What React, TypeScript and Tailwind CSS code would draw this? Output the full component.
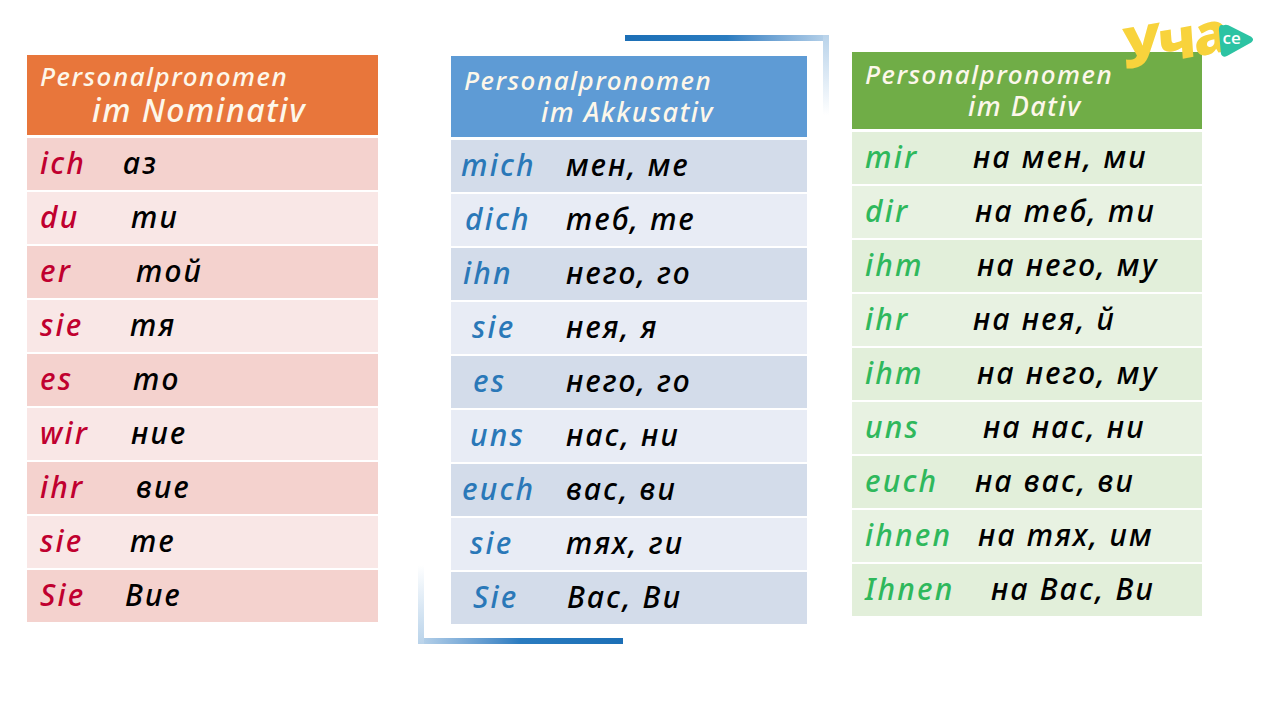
import React from 'react';

type Row = {
  de: string;
  bg: string;
  dePad: string;
  bgPad: string;
};

type Table = {
  line1: string;
  line2: string;
  line2Class: string;
  headerClass: string;
  headerHeight: string;
  wrapClass: string;
  colWidth: string;
  deColor: string;
  rowDark: string;
  rowLight: string;
  rows: Row[];
};

const TABLES: Table[] = [
  {
    line1: 'Personalpronomen',
    line2: 'im Nominativ',
    line2Class: 'pl-[52px] text-[32px] leading-[36px] tracking-[1.5px]',
    headerClass: 'bg-[#e8763b]',
    headerHeight: 'h-[80px]',
    wrapClass: 'mt-[55px] ml-[27px] w-[351px]',
    colWidth: 'w-[96px]',
    deColor: 'text-[#c0002f]',
    rowDark: 'bg-[#f4d2ce]',
    rowLight: 'bg-[#f9e7e6]',
    rows: [
      { de: 'ich', bg: 'аз', dePad: 'pl-[13px]', bgPad: 'pl-[0px]' },
      { de: 'du', bg: 'ти', dePad: 'pl-[13px]', bgPad: 'pl-[8px]' },
      { de: 'er', bg: 'той', dePad: 'pl-[13px]', bgPad: 'pl-[13px]' },
      { de: 'sie', bg: 'тя', dePad: 'pl-[13px]', bgPad: 'pl-[7px]' },
      { de: 'es', bg: 'то', dePad: 'pl-[13px]', bgPad: 'pl-[10px]' },
      { de: 'wir', bg: 'ние', dePad: 'pl-[13px]', bgPad: 'pl-[8px]' },
      { de: 'ihr', bg: 'вие', dePad: 'pl-[13px]', bgPad: 'pl-[13px]' },
      { de: 'sie', bg: 'те', dePad: 'pl-[13px]', bgPad: 'pl-[7px]' },
      { de: 'Sie', bg: 'Вие', dePad: 'pl-[13px]', bgPad: 'pl-[2px]' },
    ],
  },
  {
    line1: 'Personalpronomen',
    line2: 'im Akkusativ',
    line2Class: 'pl-[77px] text-[27px] leading-[31px] tracking-[1.5px]',
    headerClass: 'bg-[#5e9bd5]',
    headerHeight: 'h-[81px]',
    wrapClass: 'mt-[56px] ml-[73px] w-[356px]',
    colWidth: 'w-[115px]',
    deColor: 'text-[#2a78b8]',
    rowDark: 'bg-[#d3dcea]',
    rowLight: 'bg-[#e8ecf5]',
    rows: [
      { de: 'mich', bg: 'мен, ме', dePad: 'pl-[10px]', bgPad: 'pl-[0px]' },
      { de: 'dich', bg: 'теб, те', dePad: 'pl-[14px]', bgPad: 'pl-[0px]' },
      { de: 'ihn', bg: 'него, го', dePad: 'pl-[12px]', bgPad: 'pl-[0px]' },
      { de: 'sie', bg: 'нея, я', dePad: 'pl-[21px]', bgPad: 'pl-[0px]' },
      { de: 'es', bg: 'него, го', dePad: 'pl-[22px]', bgPad: 'pl-[0px]' },
      { de: 'uns', bg: 'нас, ни', dePad: 'pl-[19px]', bgPad: 'pl-[0px]' },
      { de: 'euch', bg: 'вас, ви', dePad: 'pl-[11px]', bgPad: 'pl-[0px]' },
      { de: 'sie', bg: 'тях, ги', dePad: 'pl-[19px]', bgPad: 'pl-[0px]' },
      { de: 'Sie', bg: 'Вас, Ви', dePad: 'pl-[22px]', bgPad: 'pl-[1px]' },
    ],
  },
  {
    line1: 'Personalpronomen',
    line2: 'im Dativ',
    line2Class: 'pl-[103px] text-[27px] leading-[31px] tracking-[1.5px]',
    headerClass: 'bg-[#70ad47]',
    headerHeight: 'h-[77px]',
    wrapClass: 'mt-[52px] ml-[45px] w-[350px]',
    colWidth: 'w-[121px]',
    deColor: 'text-[#2fb85c]',
    rowDark: 'bg-[#e2efda]',
    rowLight: 'bg-[#e8f2e2]',
    rows: [
      { de: 'mir', bg: 'на мен, ми', dePad: 'pl-[13px]', bgPad: 'pl-[0px]' },
      { de: 'dir', bg: 'на теб, ти', dePad: 'pl-[13px]', bgPad: 'pl-[2px]' },
      { de: 'ihm', bg: 'на него, му', dePad: 'pl-[13px]', bgPad: 'pl-[4px]' },
      { de: 'ihr', bg: 'на нея, й', dePad: 'pl-[13px]', bgPad: 'pl-[0px]' },
      { de: 'ihm', bg: 'на него, му', dePad: 'pl-[13px]', bgPad: 'pl-[4px]' },
      { de: 'uns', bg: 'на нас, ни', dePad: 'pl-[13px]', bgPad: 'pl-[10px]' },
      { de: 'euch', bg: 'на вас, ви', dePad: 'pl-[13px]', bgPad: 'pl-[2px]' },
      { de: 'ihnen', bg: 'на тях, им', dePad: 'pl-[13px]', bgPad: 'pl-[5px]' },
      { de: 'Ihnen', bg: 'на Вас, Ви', dePad: 'pl-[13px]', bgPad: 'pl-[18px]' },
    ],
  },
];

const FONT = "font-['Noto_Sans','Open_Sans',Roboto,sans-serif] italic font-medium";

function PronounTable({ table }: { table: Table }) {
  return (
    <div className={`${table.wrapClass} flex flex-col gap-[3px]`}>
      {/* Header */}
      <div className={`${table.headerClass} ${table.headerHeight} flex flex-col justify-center pl-[13px] pb-[2px] text-[#fdf7ea]`}>
        <div className="text-[26px] leading-[31px] tracking-[1.5px]">{table.line1}</div>
        <div className={table.line2Class}>{table.line2}</div>
      </div>

      {/* Rows */}
      <div className="flex flex-col gap-[2px]">
        {table.rows.map((row, i) => (
          <div
            key={i}
            className={`h-[52px] flex items-center pb-[4px] text-[30px] tracking-[2.2px] ${i % 2 === 0 ? table.rowDark : table.rowLight}`}
          >
            <span className={`${table.colWidth} shrink-0 ${row.dePad} ${table.deColor}`}>{row.de}</span>
            <span className={`${row.bgPad} text-black`}>{row.bg}</span>
          </div>
        ))}
      </div>
    </div>
  );
}

function Logo() {
  return (
    <div className="absolute left-[1122px] top-[10px] flex items-start">
      <span className="font-['Open_Sans','Noto_Sans',sans-serif] font-extrabold not-italic text-[56px] leading-none text-[#f8d33c] -rotate-[10deg] -skew-x-[6deg] tracking-[-2px]">
        Уча
      </span>
      <div className="relative w-[38px] h-[37px] -ml-[10px] mt-[12px]">
        <svg viewBox="0 0 40 38" className="absolute inset-0 w-full h-full">
          <path
            d="M7 3 Q2 1 2 8 L4 32 Q5 38 11 35 L36 21 Q40 18 36 15 L12 3 Q9 2 7 3 Z"
            fill="#2cc3a3"
          />
        </svg>
        <span className="absolute left-[6px] top-[7px] font-['Open_Sans',sans-serif] not-italic font-semibold text-[17px] leading-none text-white">
          ce
        </span>
      </div>
    </div>
  );
}

export default function App() {
  return (
    <div lang="bg" className={`relative w-[1278px] h-[720px] bg-white overflow-hidden ${FONT}`}>
      {/* Decorative frame lines around the middle table */}
      <div className="absolute left-[625px] top-[35px] w-[204px] h-[6px] bg-gradient-to-r from-[#1c6fb6] via-[#2a7cc0] to-[#b9d3ea]" />
      <div className="absolute left-[823px] top-[35px] w-[6px] h-[80px] bg-gradient-to-b from-[#b9d3ea] to-white" />
      <div className="absolute left-[418px] top-[638px] w-[205px] h-[6px] bg-gradient-to-r from-[#b9d3ea] via-[#2a7cc0] to-[#1c6fb6]" />
      <div className="absolute left-[418px] top-[565px] w-[6px] h-[79px] bg-gradient-to-b from-white to-[#b9d3ea]" />

      <div className="relative flex items-start">
        {TABLES.map((t, i) => (
          <PronounTable key={i} table={t} />
        ))}
      </div>

      <Logo />
    </div>
  );
}
